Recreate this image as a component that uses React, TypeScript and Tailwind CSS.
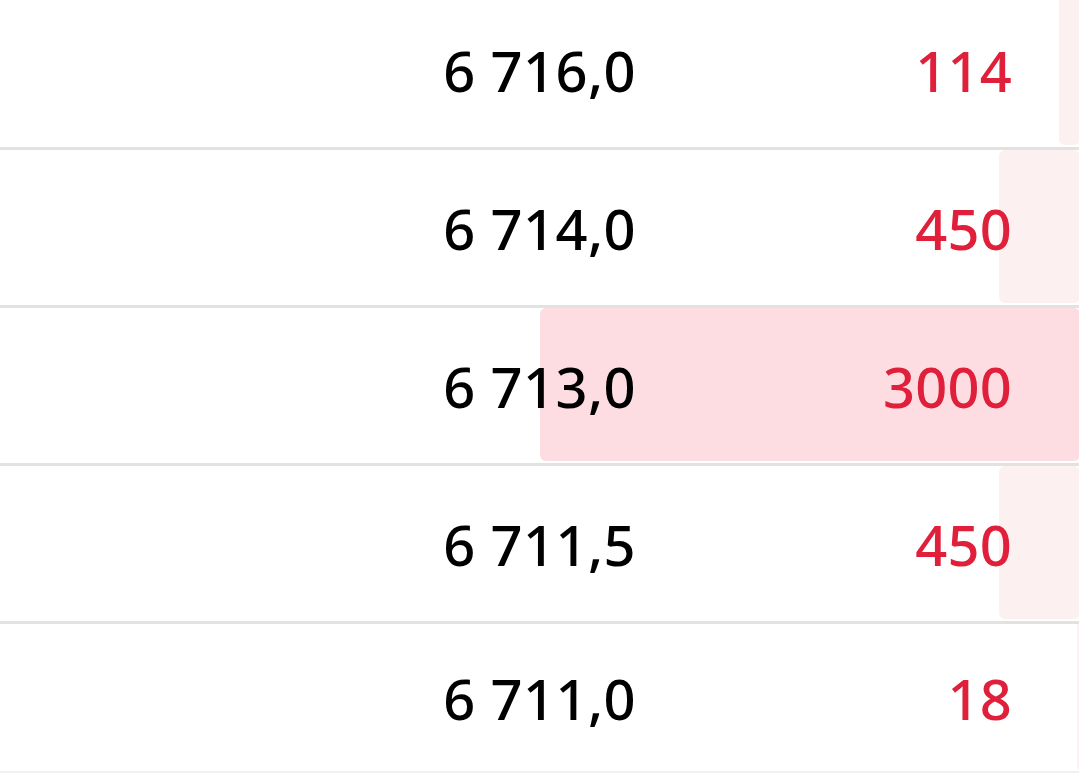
import React from "react";

type Row = { price: string; qty: number; last?: boolean };

const rows: Row[] = [
  { price: "6 716,0", qty: 114 },
  { price: "6 714,0", qty: 450 },
  { price: "6 713,0", qty: 3000 },
  { price: "6 711,5", qty: 450 },
  { price: "6 711,0", qty: 18, last: true },
];

const MAX = 3000;

export default function App() {
  return (
    <div
      className="w-[1079px] h-[773px] overflow-hidden bg-white"
      style={{ fontFamily: '"Noto Sans", "Open Sans", sans-serif' }}
    >
      <div className="-mt-[8px] flex flex-col">
        {rows.map((r, i) => {
          const w = (r.qty / MAX) * 540;
          const big = r.qty === MAX;
          return (
            <div
              key={i}
              className={
                r.last
                  ? "relative h-[150px] border-b-[3px] border-[#f1f1f1] flex items-center"
                  : "relative h-[158px] border-b-[3px] border-[#e2e2e2] flex items-center"
              }
            >
              <div
                className={
                  big
                    ? "absolute right-[-1px] top-[0px] bottom-[2px] rounded-[6px] bg-[#fddde1]"
                    : "absolute right-[-1px] top-[0px] bottom-[2px] rounded-[6px] bg-[#fdf0f1]"
                }
                style={{ width: `${w}px` }}
              />
              <div className="relative w-[636px] text-right text-[56px] font-medium leading-none text-black tracking-[0.4px]">
                {r.price}
              </div>
              <div className="relative flex-1 text-right pr-[67px] text-[56px] font-medium leading-none text-[#e01f3b] tracking-[0.2px]">
                {r.qty}
              </div>
            </div>
          );
        })}
      </div>
    </div>
  );
}
